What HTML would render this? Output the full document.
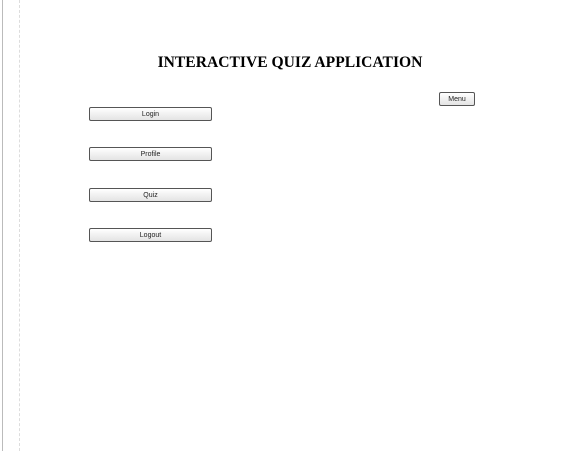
<!DOCTYPE html><html><head><style>
body{margin:0;width:564px;height:451px;background:#fff;position:relative;overflow:hidden;font-family:"Liberation Sans",sans-serif}
.l1{position:absolute;left:2px;top:0;width:1px;height:451px;background:#bbb}
.l2{position:absolute;left:19px;top:0;height:451px;border-left:1px dashed #ddd}
h1{position:absolute;left:0;width:580px;top:54px;margin:0;text-align:center;font:bold 15.6px "Liberation Serif",serif;color:#000}
.b{position:absolute;box-sizing:border-box;border:1px solid #555;border-radius:2px;background:linear-gradient(#fff,#eee 60%,#e4e4e4);font-size:7px;color:#222;text-align:center}
.m{left:89px;width:123px;height:14px;line-height:14px}
</style></head><body>
<div class="l1"></div><div class="l2"></div>
<h1>INTERACTIVE QUIZ APPLICATION</h1>
<div class="b" style="left:439px;top:92px;width:36px;height:14px;line-height:13px">Menu</div>
<div class="b m" style="top:107px">Login</div>
<div class="b m" style="top:147px">Profile</div>
<div class="b m" style="top:188px">Quiz</div>
<div class="b m" style="top:228px">Logout</div>
</body></html>
